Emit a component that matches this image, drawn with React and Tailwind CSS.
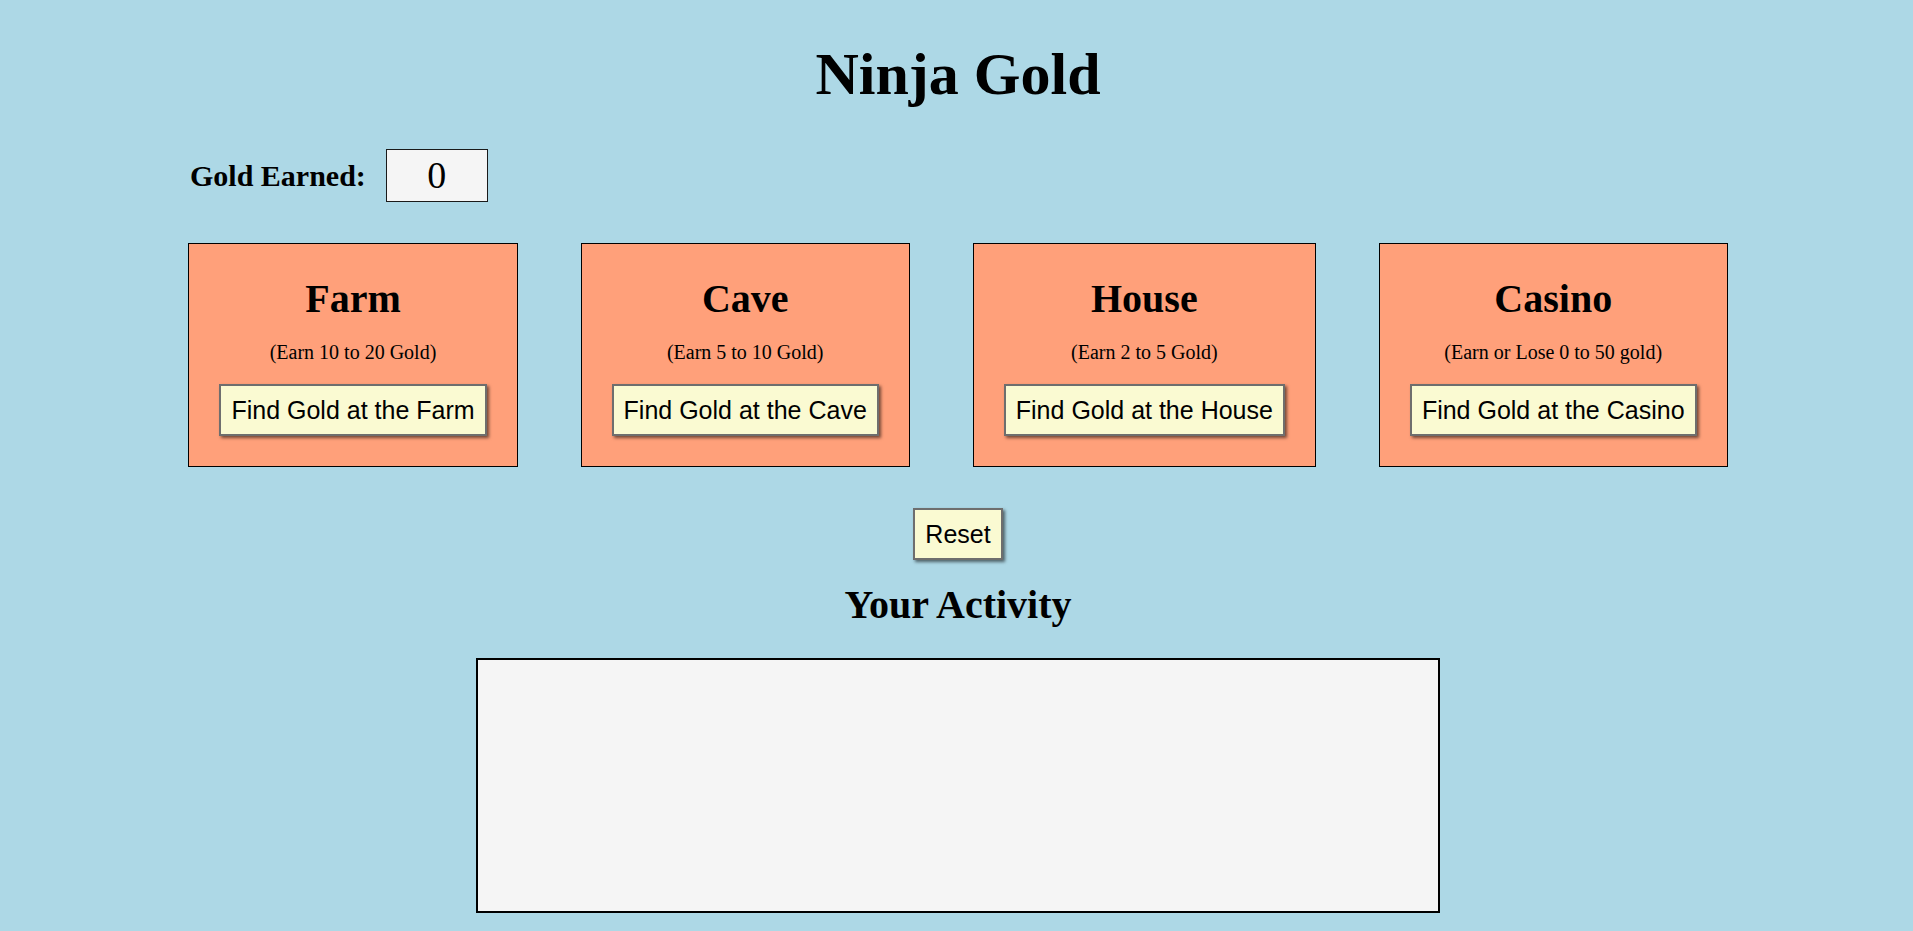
import { useState } from 'react';

const SERIF = "font-['Liberation_Serif','Times_New_Roman',serif]";
const SANS = "font-['Liberation_Sans',Arial,sans-serif]";

const PLACES = [
  { name: 'Farm', hint: '(Earn 10 to 20 Gold)', min: 10, max: 20 },
  { name: 'Cave', hint: '(Earn 5 to 10 Gold)', min: 5, max: 10 },
  { name: 'House', hint: '(Earn 2 to 5 Gold)', min: 2, max: 5 },
  { name: 'Casino', hint: '(Earn or Lose 0 to 50 gold)', min: -50, max: 50 },
];

function rand(min, max) {
  return Math.floor(Math.random() * (max - min + 1)) + min;
}

// Same beveled yellow button for the four places and Reset.
function GoldButton({ children, onClick, className = '' }) {
  return (
    <button
      type="button"
      onClick={onClick}
      className={`${SANS} text-[25px] leading-[28px] text-black bg-[#fafad2] border-2 border-[#6e6e6e] px-[10px] py-[10px] shadow-[2px_2px_3px_rgba(0,0,0,0.55)] whitespace-nowrap ${className}`}
    >
      {children}
    </button>
  );
}

export default function App() {
  const [gold, setGold] = useState(0);
  const [log, setLog] = useState([]);

  const visit = (place) => {
    const amount = rand(place.min, place.max);
    setGold((g) => g + amount);
    setLog((l) => [
      amount >= 0
        ? `Earned ${amount} gold from the ${place.name.toLowerCase()}!`
        : `Entered a casino and lost ${-amount} gold... Ouch.`,
      ...l,
    ]);
  };

  const reset = () => {
    setGold(0);
    setLog([]);
  };

  return (
    <div className={`min-h-[931px] bg-[#add8e6] text-black pt-[44px] pl-[3px] ${SERIF}`}>
      <h1 className="text-center text-[60px] leading-[60px] font-bold">Ninja Gold</h1>

      <div className="mt-[45px] pl-[187px] flex items-center gap-[20px]">
        <span className="text-[30px] leading-[30px] font-bold">Gold Earned:</span>
        <div className="w-[102px] h-[53px] border border-[#1a1a1a] bg-[#f5f5f5] flex items-center justify-center text-[38px] leading-[51px]">
          {gold}
        </div>
      </div>

      <div className="mt-[41px] flex justify-center items-start gap-[63px]">
        {PLACES.map((p) => (
          <div key={p.name} className="border border-black bg-[#ffa07a] pt-[33px] pb-[30px] px-[30px] flex flex-col items-center">
            <h2 className="text-[40px] leading-[44px] font-bold">{p.name}</h2>
            <p className="mt-[20px] text-[20px] leading-[23px]">{p.hint}</p>
            <GoldButton className="mt-[20px]" onClick={() => visit(p)}>
              Find Gold at the {p.name}
            </GoldButton>
          </div>
        ))}
      </div>

      <div className="mt-[41px] flex justify-center">
        <GoldButton onClick={reset}>Reset</GoldButton>
      </div>

      <h2 className="mt-[23px] text-center text-[40px] leading-[44px] font-bold">Your Activity</h2>

      <div className="mt-[31px] mx-auto w-[964px] h-[255px] border-2 border-black bg-[#f5f5f5] overflow-y-auto px-3 py-2 text-[18px]">
        {log.map((line, i) => (
          <p key={i}>{line}</p>
        ))}
      </div>
    </div>
  );
}
